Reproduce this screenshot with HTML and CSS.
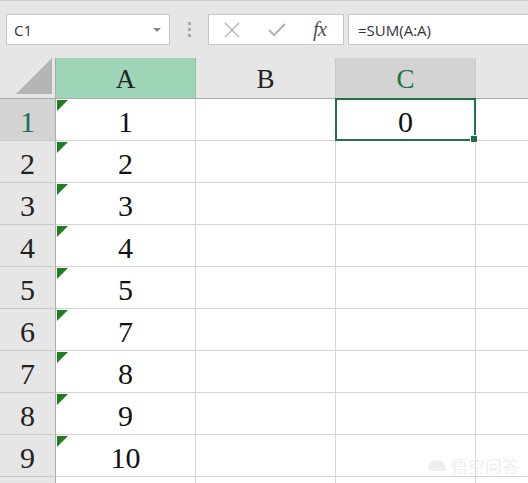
FILE: index.html
```html
<!DOCTYPE html>
<html>
<head>
<meta charset="utf-8">
<link rel="stylesheet" href="styles.css">
</head>
<body>
<div class="app">
  <div class="toolbar">
    <div class="namebox">
      <span class="name">C1</span>
      <span class="caret"></span>
    </div>
    <div class="grip"><i></i><i></i><i></i></div>
    <div class="fxbox">
      <svg class="ico" width="18" height="18" viewBox="0 0 18 18"><path d="M2 2 L16 16 M16 2 L2 16" stroke="#b3b3b3" stroke-width="1.4" fill="none"/></svg>
      <svg class="ico" width="20" height="18" viewBox="0 0 20 18"><path d="M2 9 L7 14 L18 3" stroke="#b3b3b3" stroke-width="2" fill="none"/></svg>
      <span class="fx">fx</span>
    </div>
    <div class="formula">=SUM(A:A)</div>
  </div>
  <div class="sheet">
    <div class="corner"><span class="tri"></span></div>
    <div class="ch sel-col">A</div>
    <div class="ch">B</div>
    <div class="ch active">C</div>
    <div class="ch last"></div>

    <div class="rh active">1</div><div class="c a">1</div><div class="c"></div><div class="c cur">0</div><div class="c last"></div>
    <div class="rh">2</div><div class="c a">2</div><div class="c"></div><div class="c"></div><div class="c last"></div>
    <div class="rh">3</div><div class="c a">3</div><div class="c"></div><div class="c"></div><div class="c last"></div>
    <div class="rh">4</div><div class="c a">4</div><div class="c"></div><div class="c"></div><div class="c last"></div>
    <div class="rh">5</div><div class="c a">5</div><div class="c"></div><div class="c"></div><div class="c last"></div>
    <div class="rh">6</div><div class="c a">7</div><div class="c"></div><div class="c"></div><div class="c last"></div>
    <div class="rh">7</div><div class="c a">8</div><div class="c"></div><div class="c"></div><div class="c last"></div>
    <div class="rh">8</div><div class="c a">9</div><div class="c"></div><div class="c"></div><div class="c last"></div>
    <div class="rh">9</div><div class="c a">10</div><div class="c"></div><div class="c"></div><div class="c last"></div>
    <div class="rh"></div><div class="c"></div><div class="c"></div><div class="c"></div><div class="c last"></div>
  </div>
  <div class="mark"><span class="logo"></span>悟空问答</div>
</div>
</body>
</html>
```

FILE: styles.css
```css
* { box-sizing: border-box; }
html, body { margin: 0; padding: 0; }
body { width: 528px; height: 483px; overflow: hidden; background: #fff; }
.app { position: relative; width: 528px; height: 483px; overflow: hidden; }

.toolbar {
  height: 58px;
  background: #e6e6e6;
  border-top: 1px solid #d0d0d0;
  display: flex;
  align-items: flex-start;
  padding-top: 13px;
  padding-left: 6px;
}
.namebox {
  width: 164px; height: 31px;
  background: #fff;
  border: 1px solid #c6c6c6;
  display: flex; align-items: center; justify-content: space-between;
  padding: 0 8px 0 7px;
}
.name, .formula {
  font-family: "Open Sans", "Liberation Sans", sans-serif;
  font-size: 15px; color: #333;
}
.caret {
  width: 0; height: 0;
  border-left: 4px solid transparent; border-right: 4px solid transparent;
  border-top: 4px solid #888;
}
.grip {
  width: 38px; height: 31px;
  display: flex; flex-direction: column; align-items: center; justify-content: center; gap: 3px;
}
.grip i { display: block; width: 3px; height: 3px; background: #a8a8a8; }
.fxbox {
  width: 136px; height: 31px;
  background: #fff; border: 1px solid #c6c6c6;
  display: flex; align-items: center;
  padding-left: 14px; gap: 26px;
}
.ico { display: block; }
.fx {
  font-family: "Liberation Serif", serif; font-style: italic;
  font-size: 21px; color: #555; letter-spacing: -1px;
}
.formula {
  flex: 1; height: 31px; margin-left: 4px;
  background: #fff; border: 1px solid #c6c6c6; border-right: none;
  display: flex; align-items: center; padding-left: 9px;
}

.sheet {
  display: grid;
  grid-template-columns: 56px 140px 140px 140px 52px;
  grid-template-rows: 41px repeat(10, 42px);
}
.corner {
  position: relative; background: #e6e6e6;
  border-right: 1px solid #ababab; border-bottom: 1px solid #ababab;
}
.tri {
  position: absolute; right: 3px; bottom: 4px;
  width: 0; height: 0;
  border-left: 36px solid transparent;
  border-bottom: 36px solid #b4b4b4;
}
.ch {
  background: #e6e6e6;
  border-right: 1px solid #c8c8c8; border-bottom: 1px solid #ababab;
  font-family: "Liberation Serif", serif; font-size: 27px; color: #222;
  display: flex; align-items: center; justify-content: center; padding-top: 2px;
}
.ch.sel-col { background: #9fd5b7; border-right-color: #8cc4a5; }
.ch.active { background: #d3d3d3; color: #217346; border-bottom: 1px solid #217346; }
.ch.last { border-right: none; }
.rh {
  background: #e6e6e6;
  border-right: 1px solid #ababab; border-bottom: 1px solid #c8c8c8;
  font-family: "Liberation Serif", serif; font-size: 30px; color: #222;
  display: flex; align-items: center; justify-content: center; padding-top: 4px;
}
.rh.active { background: #d3d3d3; color: #1f6b5a; }
.c {
  position: relative;
  border-right: 1px solid #d4d4d4; border-bottom: 1px solid #d4d4d4;
  font-family: "Liberation Serif", serif; font-size: 30px; color: #111;
  display: flex; align-items: center; justify-content: center; padding-top: 4px;
}
.c.last { border-right: none; }
.c.a::before {
  content: ""; position: absolute; left: 1px; top: 1px;
  width: 0; height: 0;
  border-top: 11px solid #1d7f1d;
  border-right: 11px solid transparent;
}
.c.cur::after {
  content: ""; position: absolute;
  left: -1px; top: -1px; right: -1px; bottom: -1px;
  border: 2px solid #217346;
}
.c.cur::before {
  content: ""; position: absolute; right: -3px; bottom: -3px;
  width: 6px; height: 6px; background: #217346; border: 1px solid #fff; z-index: 2;
}

.mark {
  position: absolute; left: 428px; top: 453px;
  font-family: "Noto Sans CJK SC", sans-serif; font-size: 17px; color: #eeeeee;
  display: flex; align-items: center; gap: 5px;
}
.logo { display: inline-block; width: 18px; height: 11px; border-radius: 9px 9px 2px 2px; background: #eeeeee; }
```
